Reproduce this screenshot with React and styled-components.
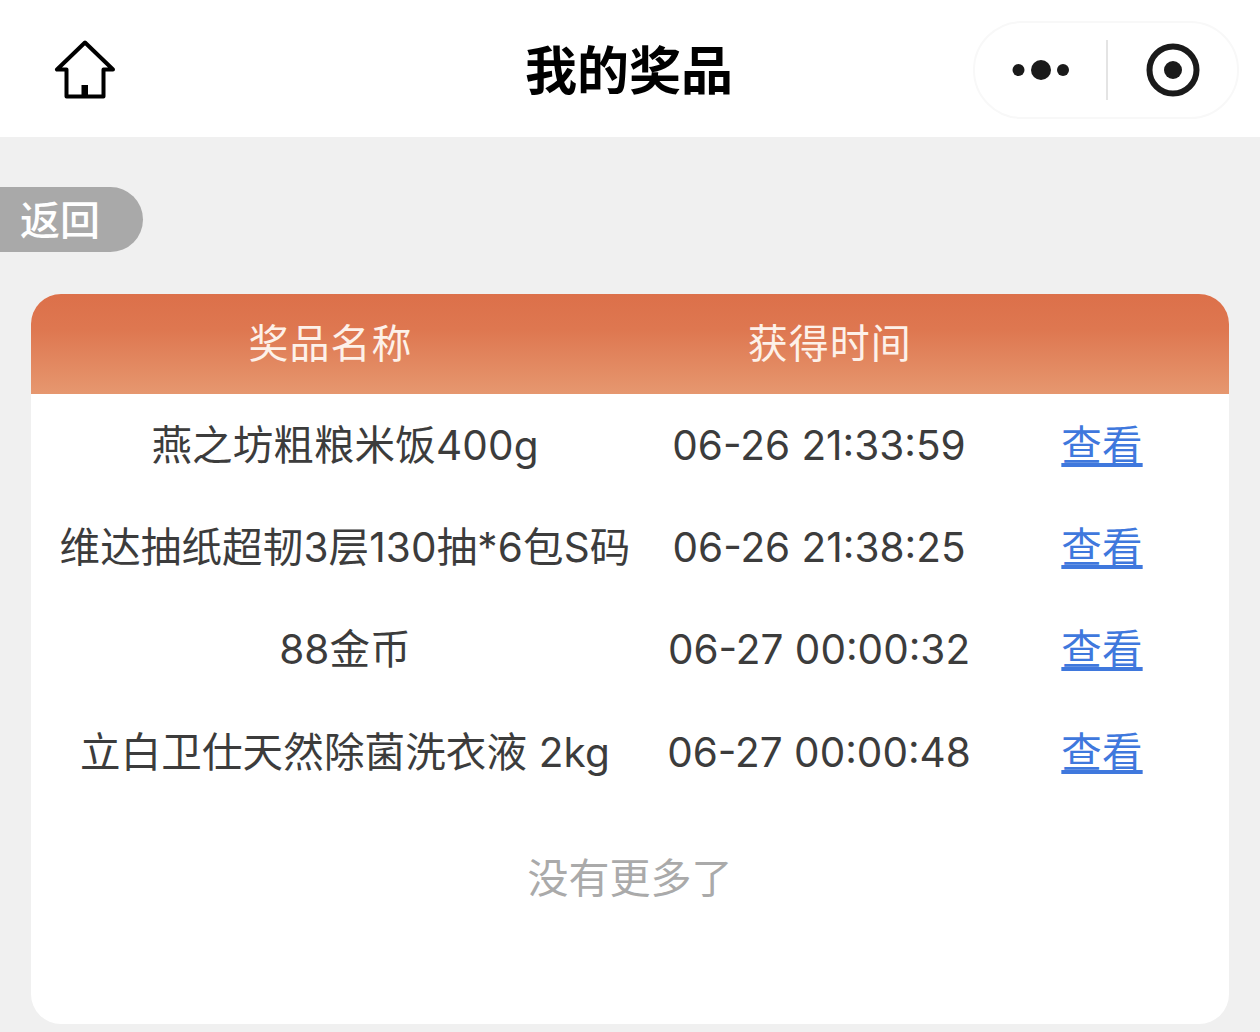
import React from 'react';
import styled, { createGlobalStyle } from 'styled-components';

const prizes = [
    { name: '燕之坊粗粮米饭400g', time: '06-26 21:33:59' },
    { name: '维达抽纸超韧3层130抽*6包S码', time: '06-26 21:38:25' },
    { name: '88金币', time: '06-27 00:00:32' },
    { name: '立白卫仕天然除菌洗衣液 2kg', time: '06-27 00:00:48' },
];

export default function App() {
    return (
        <Page>
            <GlobalStyle />
            <NavBar>
                <HomeButton>
                    <svg width="62" height="60" viewBox="0 0 62 60" fill="none">
                        <path
                            d="M31 2.5L3 29.5H12.5V56.5H49.5V29.5H59Z"
                            stroke="#000"
                            strokeWidth="4"
                            strokeLinejoin="round"
                        />
                        <rect x="27.5" y="45" width="6.5" height="11" fill="#000" />
                    </svg>
                </HomeButton>
                <Title>我的奖品</Title>
                <Capsule>
                    <svg width="58" height="22" viewBox="0 0 58 22">
                        <circle cx="6.5" cy="11" r="6" fill="#1a1a1a" />
                        <circle cx="29" cy="11" r="10" fill="#1a1a1a" />
                        <circle cx="51" cy="11" r="6" fill="#1a1a1a" />
                    </svg>
                    <CapsuleDivider />
                    <svg width="54" height="54" viewBox="0 0 54 54">
                        <circle cx="27" cy="27" r="23.5" fill="none" stroke="#1a1a1a" strokeWidth="6" />
                        <circle cx="27" cy="27" r="9" fill="#1a1a1a" />
                    </svg>
                </Capsule>
            </NavBar>
            <Content>
                <BackButton>返回</BackButton>
                <Card>
                    <CardHead>
                        <HeadCell $flex={3}>奖品名称</HeadCell>
                        <HeadCell $flex={2}>获得时间</HeadCell>
                        <HeadCell $flex={1} />
                    </CardHead>
                    {prizes.map((p) => (
                        <Row key={p.time}>
                            <NameCell>{p.name}</NameCell>
                            <TimeCell>{p.time}</TimeCell>
                            <LinkCell>
                                <ViewLink>查看</ViewLink>
                            </LinkCell>
                        </Row>
                    ))}
                    <NoMore>没有更多了</NoMore>
                </Card>
            </Content>
        </Page>
    );
}

const GlobalStyle = createGlobalStyle`
    html, body {
        margin: 0;
        padding: 0;
        background: #f0f0f0;
    }
    * {
        box-sizing: border-box;
    }
`;

const Page = styled.div`
    width: 1260px;
    height: 1032px;
    overflow: hidden;
    background: #f0f0f0;
    font-family: Inter, "Noto Sans CJK SC", sans-serif;
    display: flex;
    flex-direction: column;
`;

const NavBar = styled.header`
    height: 137px;
    flex-shrink: 0;
    background: #fff;
    padding: 22px 21px 19px 54px;
    display: flex;
    align-items: center;
    justify-content: space-between;
`;

const HomeButton = styled.div`
    width: 62px;
    height: 60px;
    flex-shrink: 0;
`;

const Title = styled.h1`
    margin: 4px 0 0 409px;
    font-size: 52px;
    line-height: 60px;
    font-weight: 700;
    color: #000;
    white-space: nowrap;
    flex: 1;
`;

const Capsule = styled.div`
    width: 266px;
    height: 98px;
    flex-shrink: 0;
    border: 2px solid #f8f8f8;
    border-radius: 49px;
    padding-left: 37px;
    display: flex;
    align-items: center;
    background: #fff;
`;

const CapsuleDivider = styled.span`
    width: 2px;
    height: 60px;
    background: #e4e4e4;
    margin: 0 38px 0 36px;
`;

const Content = styled.main`
    flex: 1;
    padding: 50px 31px 8px;
    display: flex;
    flex-direction: column;
    min-height: 0;
`;

const BackButton = styled.div`
    width: 143px;
    height: 65px;
    margin-left: -31px;
    padding-left: 20px;
    background: #a9a9a9;
    border-radius: 0 33px 33px 0;
    color: #fff;
    font-size: 40px;
    font-weight: 500;
    line-height: 67px;
    flex-shrink: 0;
`;

const Card = styled.section`
    margin-top: 42px;
    flex: 1;
    background: #fff;
    border-radius: 30px;
    overflow: hidden;
    display: flex;
    flex-direction: column;
`;

const CardHead = styled.div`
    height: 100px;
    flex-shrink: 0;
    display: flex;
    align-items: center;
    background: linear-gradient(180deg, #dc704a 0%, #de7750 35%, #e6976f 100%);
`;

const HeadCell = styled.div`
    flex: ${(p) => p.$flex};
    text-align: center;
    color: #fdf1e9;
    font-size: 40px;
    line-height: 96px;
    letter-spacing: 1px;
`;

const Row = styled.div`
    height: 102.4px;
    display: grid;
    grid-template-columns: 628px 320px 246px;
    align-items: center;
    color: #3c3c3c;
    font-size: 40.5px;
    letter-spacing: 0.15px;
    text-align: center;
    white-space: nowrap;
    padding-top: 1px;
`;

const NameCell = styled.div`
    line-height: 58px;
`;

const TimeCell = styled.div`
    line-height: 58px;
    letter-spacing: 0;
`;

const LinkCell = styled.div`
    line-height: 58px;
`;

const ViewLink = styled.a`
    color: #3f78dd;
    text-decoration: underline;
    cursor: pointer;
`;

const NoMore = styled.div`
    margin-top: 44px;
    text-align: center;
    color: #aaa;
    font-size: 41px;
    line-height: 60px;
`;
